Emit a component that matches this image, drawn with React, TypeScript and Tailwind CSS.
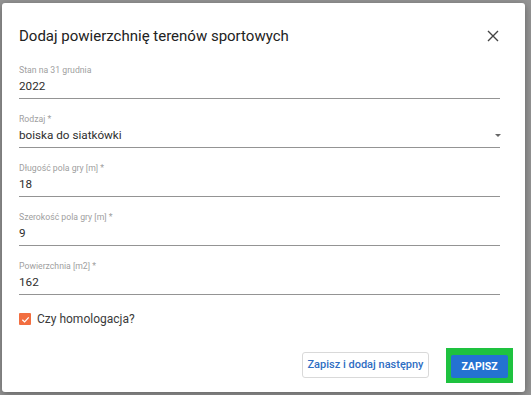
import React from "react";

const fields = [
  { label: "Stan na 31 grudnia", value: "2022" },
  { label: "Rodzaj *", value: "boiska do siatkówki", select: true },
  { label: "Długość pola gry [m] *", value: "18" },
  { label: "Szerokość pola gry [m] *", value: "9" },
  { label: "Powierzchnia [m2] *", value: "162" },
];

export default function App() {
  return (
    <div
      className="h-[395px] w-[531px] bg-[#959595] pl-[2px] pt-[3px]"
      style={{ fontFamily: "Roboto, 'Liberation Sans', sans-serif" }}
    >
      <div className="flex h-[389px] w-[523px] flex-col rounded-[3px] bg-white shadow-[0_2px_8px_rgba(0,0,0,0.35)]">
        <div className="flex items-center justify-between pl-[17px] pr-[26px] pt-[23px]">
          <h2 className="text-[15px] font-normal leading-[20px] text-[#222]">
            Dodaj powierzchnię terenów sportowych
          </h2>
          <svg width="12" height="12" viewBox="0 0 12 12" className="text-[#444]">
            <path d="M1 1L11 11M11 1L1 11" stroke="currentColor" strokeWidth="1.4" />
          </svg>
        </div>

        <div className="mt-[17px] flex flex-col gap-[13px] pl-[17px] pr-[25px]">
          {fields.map((f) => (
            <div key={f.label} className="border-b border-[#949494] pb-[3px]">
              <div className="text-[8.7px] leading-[14px] text-[#a0a0a0]">{f.label}</div>
              <div className="flex items-center justify-between">
                <span className="text-[11.7px] leading-[18px] text-[#2e2e2e]">{f.value}</span>
                {f.select && (
                  <span className="mr-[-1px] h-0 w-0 border-x-[3px] border-t-[3px] border-x-transparent border-t-[#666]" />
                )}
              </div>
            </div>
          ))}
        </div>

        <label className="ml-[17px] mt-[15px] flex items-center gap-[6px]">
          <span className="flex h-[12px] w-[12px] items-center justify-center rounded-[1px] bg-[#f26e40]">
            <svg width="9" height="9" viewBox="0 0 10 10">
              <path d="M1.5 5.2L4 7.6L8.6 2.6" fill="none" stroke="white" strokeWidth="1.4" />
            </svg>
          </span>
          <span className="text-[12px] leading-[18px] text-[#3a3a3a]">Czy homologacja?</span>
        </label>

        <div className="mt-auto flex items-center justify-end gap-[17px] pb-[9px] pr-[12px]">
          <button className="h-[26px] w-[127px] whitespace-nowrap rounded-[3px] border border-[#d9d9d9] bg-white text-[11px] font-medium text-[#2f6ec3]">
            Zapisz i dodaj następny
          </button>
          <div className="bg-[#1ec23f] p-[5px]">
            <button className="h-[23px] w-[57px] rounded-[2px] bg-[#2472d2] text-[10.5px] font-bold text-white">
              ZAPISZ
            </button>
          </div>
        </div>
      </div>
    </div>
  );
}
